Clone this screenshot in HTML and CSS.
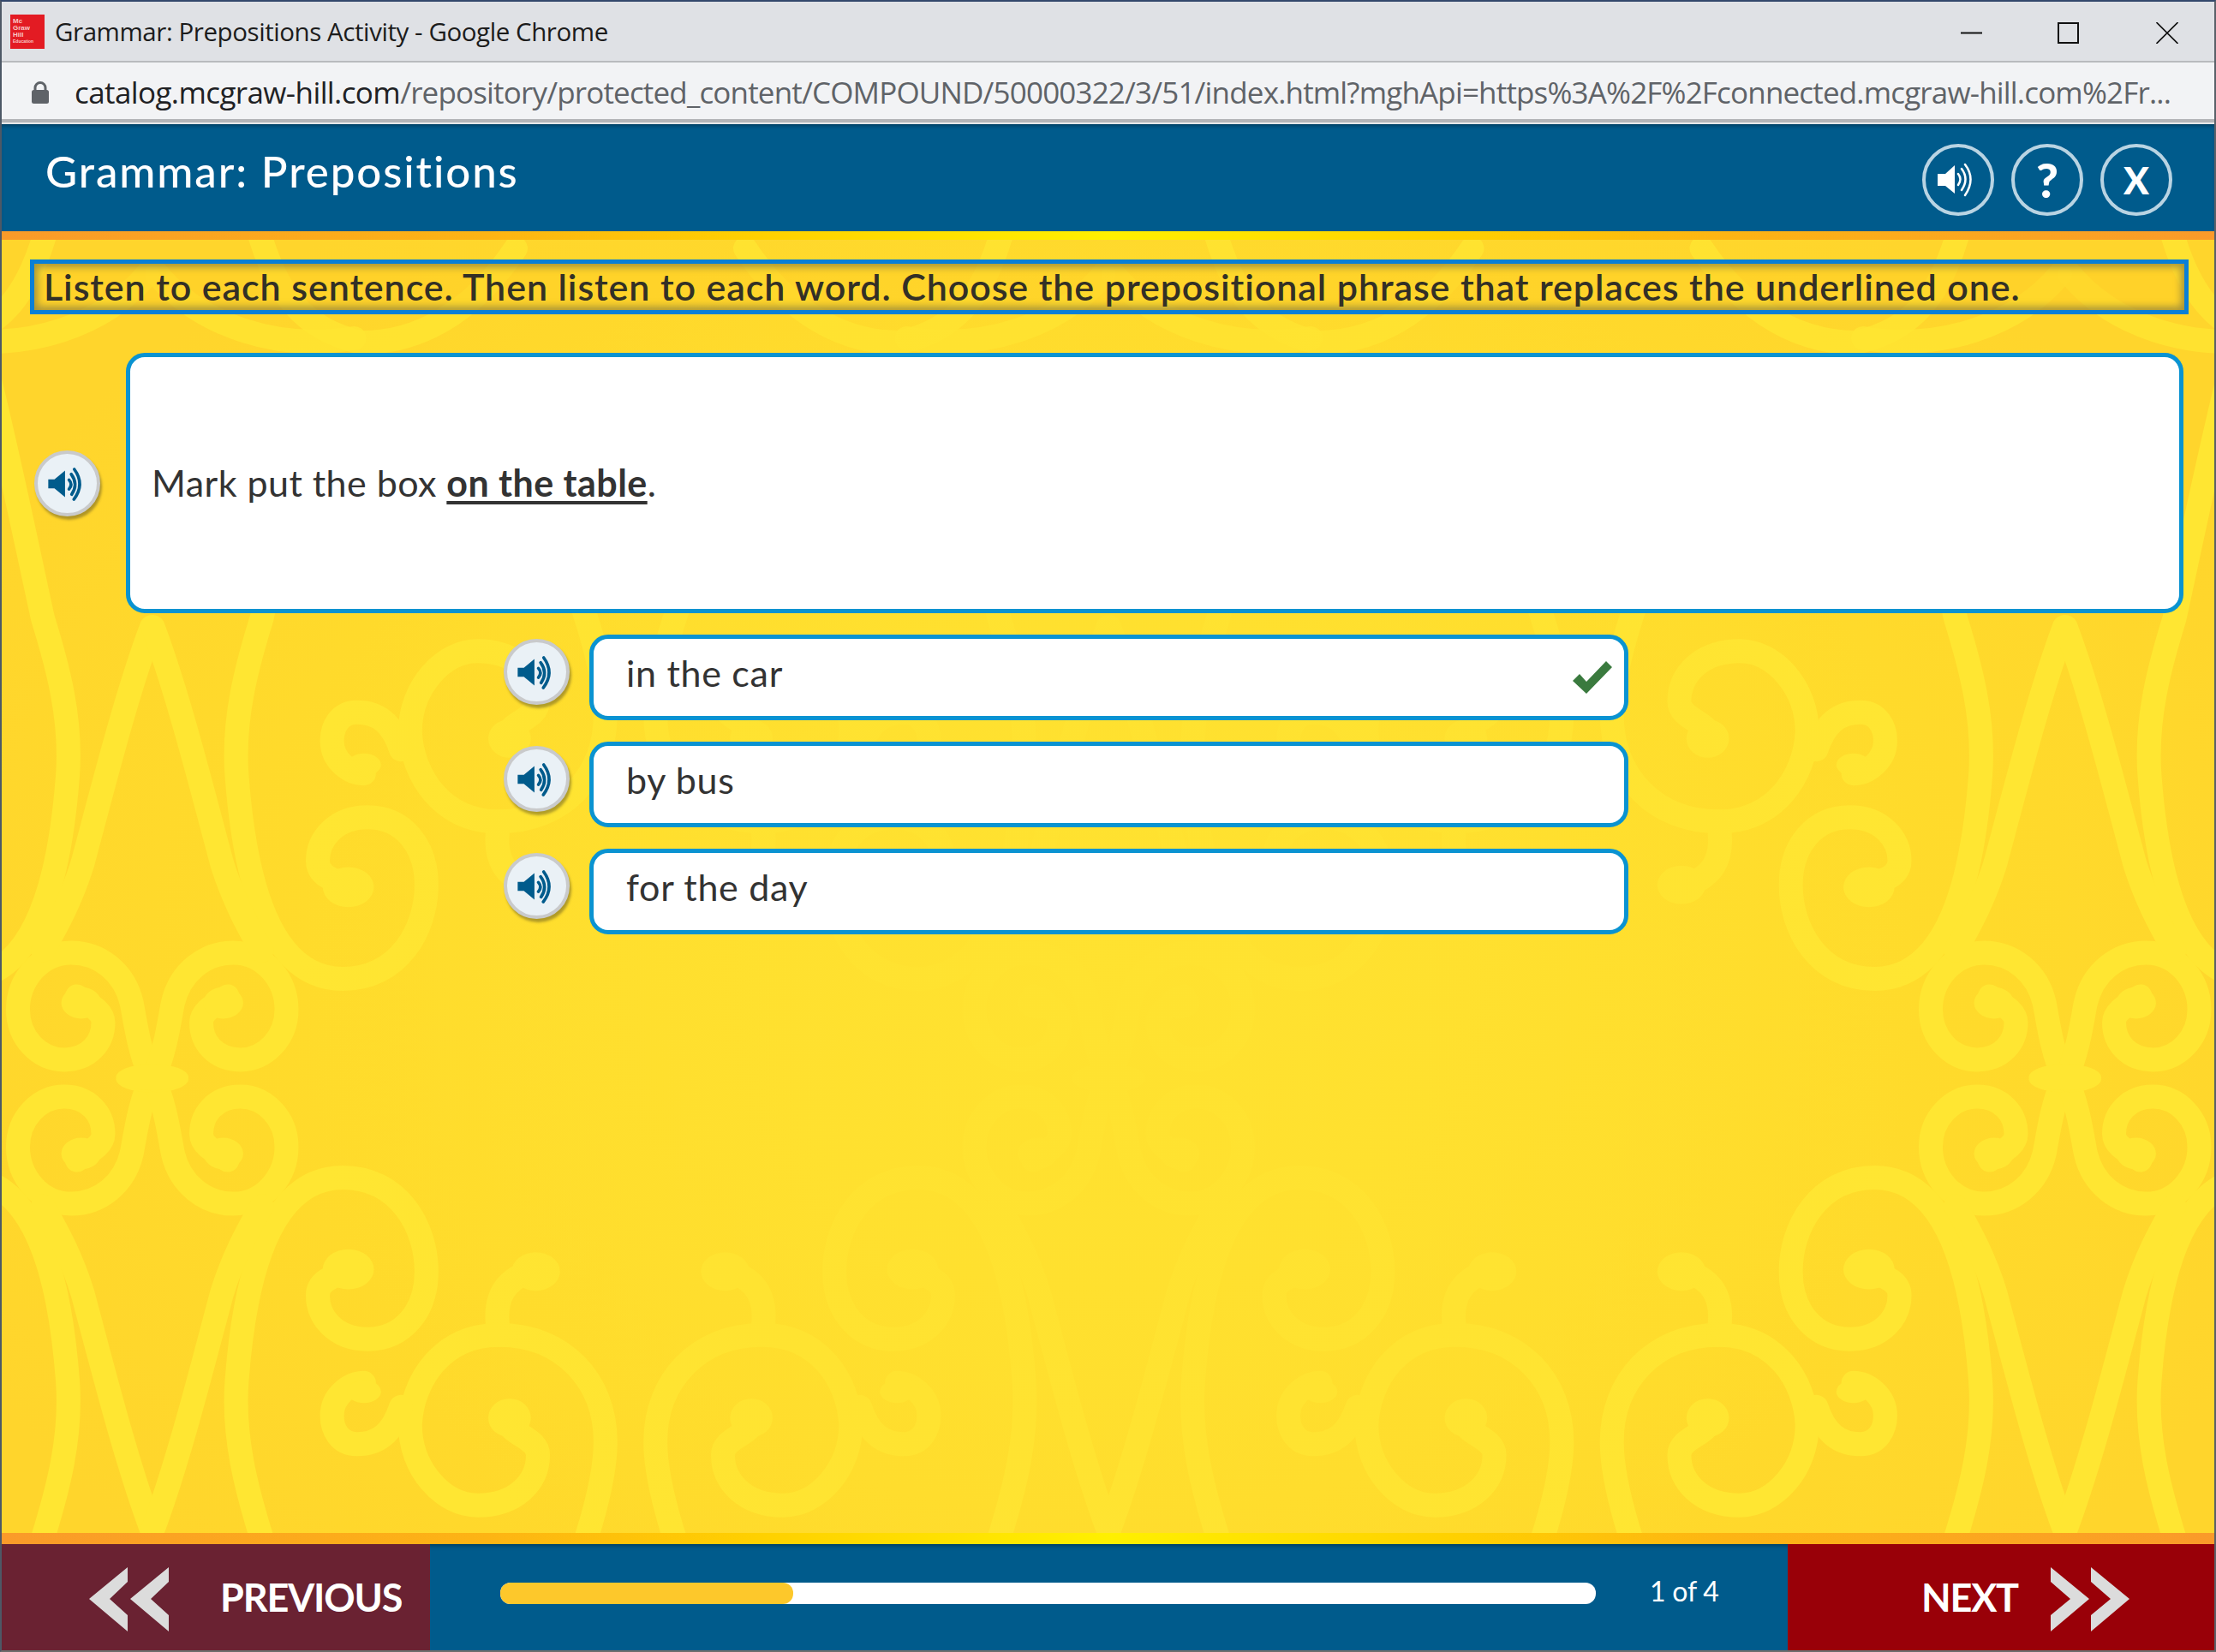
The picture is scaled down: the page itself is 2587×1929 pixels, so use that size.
FILE: index.html
```html
<!DOCTYPE html>
<html lang="en">
<head>
<meta charset="utf-8">
<title>Grammar: Prepositions Activity - Google Chrome</title>
<link rel="stylesheet" href="styles.css">
</head>
<body>
<div class="window">
  <div class="titlebar">
    <div class="favicon"><span>Mc</span><span>Graw</span><span>Hill</span><span class="fav-small">Education</span></div>
    <div class="window-title">Grammar: Prepositions Activity - Google Chrome</div>
    <div class="window-controls">
      <svg class="wc wc-min" viewBox="0 0 25 25"><path d="M0 12.5H25"/></svg>
      <svg class="wc wc-max" viewBox="0 0 25 25"><path d="M1 1H24V24H1Z"/></svg>
      <svg class="wc wc-close" viewBox="0 0 26 25"><path d="M.5 0 25.5 25M25.5 0 .5 25"/></svg>
    </div>
  </div>
  <div class="addressbar">
    <svg class="lock" viewBox="0 0 20 26"><path d="M4 11V7.5a6 6 0 0 1 12 0V11" fill="none" stroke="#5f6368" stroke-width="3"/><rect y="10" width="20" height="16" rx="2.5" fill="#5f6368"/></svg>
    <div class="url"><span class="url-host">catalog.mcgraw-hill.com</span>/repository/protected_content/COMPOUND/50000322/3/51/index.html?mghApi=https%3A%2F%2Fconnected.mcgraw-hill.com%2Fr...</div>
  </div>
  <header class="app-header">
    <h1 class="app-title">Grammar: Prepositions</h1>
    <div class="header-actions">
      <div class="round-btn">
        <svg class="round-icon" viewBox="0 0 84 84"><path class="fill-w" d="M18 35H27L38 25V58L27 49H18Z"/><path class="arc-w" d="M42 35Q47 41 42 48M46 29Q55 41 46 54M50 24Q63 41 50 60"/></svg>
      </div>
      <div class="round-btn round-q">?</div>
      <div class="round-btn round-x">X</div>
    </div>
  </header>
  <div class="band band-top"></div>
  <main class="stage">
    <svg class="pattern" viewBox="0 280 2583 1510" preserveAspectRatio="none">
      <defs>
        <radialGradient id="glow" gradientUnits="userSpaceOnUse" cx="1293" cy="1120" r="950">
          <stop offset="0" stop-color="#ffe230" stop-opacity=".94"/>
          <stop offset=".45" stop-color="#ffe130" stop-opacity=".72"/>
          <stop offset="1" stop-color="#ffdf30" stop-opacity="0"/>
        </radialGradient>
        <g id="quad" transform="translate(0 1000) scale(.8292 .5102)">
          <path class="sw" d="M213 505C231 570 236 640 241 680C251 750 286 795 326 795C371 795 401 730 401 665C401 600 371 550 336 550C301 550 281 590 281 635C281 665 306 680 318 695"/>
          <ellipse class="blob" cx="213" cy="510" rx="50" ry="30"/>
          <ellipse class="blob" cx="312" cy="680" rx="28" ry="36"/>
          <path class="sw" d="M440 2100C410 1900 385 1700 366 1560C345 1450 325 1330 331 1200C338 1050 360 735 480 735C560 735 598 850 598 950C598 1040 565 1105 515 1105C470 1105 445 1055 445 1005C445 965 475 960 490 945"/>
          <ellipse class="blob" cx="488" cy="945" rx="36" ry="46"/>
          <path class="sw" d="M213 1540C250 1380 285 1150 310 1000C325 920 345 860 366 800"/>
          <path class="sw" d="M815 1600C840 1480 850 1400 850 1340C850 1200 790 1095 700 1095C620 1095 578 1200 575 1300C575 1400 620 1485 670 1485C725 1485 755 1430 755 1370C755 1330 715 1325 712 1290"/>
          <ellipse class="blob" cx="715" cy="1285" rx="30" ry="44"/>
          <path class="sw" d="M700 1095C695 1050 695 1000 720 970C735 950 755 950 765 955"/>
          <ellipse class="blob" cx="752" cy="950" rx="34" ry="44"/>
          <path class="sw" d="M562 1260C550 1320 530 1345 500 1345C475 1345 465 1310 465 1280C465 1235 490 1205 510 1205"/>
          <ellipse class="blob" cx="510" cy="1225" rx="24" ry="26"/>
        </g>
        <g id="half">
          <use href="#quad"/>
          <use href="#quad" transform="matrix(1 0 0 -1 0 2518)"/>
          <path class="sw-top" d="M-60 395C30 410 120 380 170 320M300 270C320 340 350 385 420 400M420 400C500 400 560 350 600 290"/>
        </g>
        <g id="tile">
          <use href="#half"/>
          <use href="#half" transform="matrix(-1 0 0 1 1468 0)"/>
        </g>
      </defs>
      <use href="#tile" transform="translate(-1116.5 0)"/>
      <use href="#tile"/>
      <use href="#tile" transform="translate(1116.5 0)"/>
      <use href="#tile" transform="translate(2233 0)"/>
      <rect x="0" y="280" width="2583" height="1510" fill="url(#glow)"/>
    </svg>

    <div class="instructions">Listen to each sentence. Then listen to each word. Choose the prepositional phrase that replaces the underlined one.</div>

    <section class="question-row">
      <div class="speaker">
        <svg class="speaker-icon" viewBox="0 0 67 67"><path class="fill-b" d="M12 29H19L31 19V49L19 39H12Z"/><path class="arc-b" d="M35.500 29.500Q40 34.500 35.500 40M38 23Q46.500 34.500 38.500 46M41.500 17.500Q54 34.500 41 51.500"/></svg>
      </div>
      <div class="question-card"><span>Mark put the box <b class="target">on the table</b>.</span></div>
    </section>

    <section class="options">
      <div class="option-row">
        <div class="speaker">
          <svg class="speaker-icon" viewBox="0 0 67 67"><path class="fill-b" d="M12 29H19L31 19V49L19 39H12Z"/><path class="arc-b" d="M35.500 29.500Q40 34.500 35.500 40M38 23Q46.500 34.500 38.500 46M41.500 17.500Q54 34.500 41 51.500"/></svg>
        </div>
        <div class="option-box"><span>in the car</span>
          <svg class="check" viewBox="0 0 46 38"><path d="M0 23 8 15 16 24 39 0 46 7 16 38Z"/></svg>
        </div>
      </div>
      <div class="option-row">
        <div class="speaker">
          <svg class="speaker-icon" viewBox="0 0 67 67"><path class="fill-b" d="M12 29H19L31 19V49L19 39H12Z"/><path class="arc-b" d="M35.500 29.500Q40 34.500 35.500 40M38 23Q46.500 34.500 38.500 46M41.500 17.500Q54 34.500 41 51.500"/></svg>
        </div>
        <div class="option-box"><span>by bus</span></div>
      </div>
      <div class="option-row">
        <div class="speaker">
          <svg class="speaker-icon" viewBox="0 0 67 67"><path class="fill-b" d="M12 29H19L31 19V49L19 39H12Z"/><path class="arc-b" d="M35.500 29.500Q40 34.500 35.500 40M38 23Q46.500 34.500 38.500 46M41.500 17.500Q54 34.500 41 51.500"/></svg>
        </div>
        <div class="option-box"><span>for the day</span></div>
      </div>
    </section>
  </main>
  <div class="band band-bottom"></div>
  <footer class="app-footer">
    <div class="nav nav-prev">
      <svg class="chev" viewBox="0 0 94 75"><path d="M0 37 45 0V17L24 37 45 56V75ZM48 37 93 0V17L72 37 93 56V75Z"/></svg>
      <span class="nav-label">PREVIOUS</span>
    </div>
    <div class="progress-area">
      <div class="progress"><div class="progress-fill"></div></div>
      <div class="progress-label">1 of 4</div>
    </div>
    <div class="nav nav-next">
      <span class="nav-label">NEXT</span>
      <svg class="chev" viewBox="0 0 94 75"><path d="M0 0 45 37 0 75V56L23 37 0 17ZM47 0 92 37 47 75V56L70 37 47 17Z"/></svg>
    </div>
  </footer>
</div>
</body>
</html>
```
FILE: styles.css
```css
* { box-sizing: border-box; }
html, body { margin: 0; padding: 0; }
body { width: 2587px; height: 1929px; overflow: hidden; background: #6d6d6d; font-family: "Lato", "Liberation Sans", sans-serif; color: #333; }

.window { width: 2587px; height: 1929px; display: flex; flex-direction: column; border-top: 2px solid #33476b; border-left: 2px solid #4d5866; border-right: 2px solid #5a6068; border-bottom: 2px solid #6d6d6d; }

.titlebar { height: 71px; flex: none; display: flex; align-items: center; background: #dfe1e5; border-bottom: 2px solid #b9bbbe; padding-left: 10px; }
.favicon { width: 40px; height: 40px; background: #e31b23; color: #f8c8c8; display: flex; flex-direction: column; justify-content: center; padding-left: 3px; font: 700 8px/8px "Liberation Sans", sans-serif; overflow: hidden; }
.fav-small { font-size: 5px; line-height: 7px; }
.window-title { margin-left: 12px; font: 400 29.500px/40px "Open Sans", sans-serif; color: #1c1c1c; white-space: nowrap; letter-spacing: -.43px; }
.window-controls { margin-left: auto; display: flex; align-items: center; gap: 88px; padding: 3px 42px 0 0; }
.wc { fill: none; stroke: #111; stroke-width: 2; display: block; }
.wc-min { width: 25px; height: 25px; }
.wc-max { width: 25px; height: 25px; }
.wc-close { width: 26px; height: 25px; stroke-width: 1.600; margin-left: 2px; }

.addressbar { height: 70px; flex: none; display: flex; align-items: center; background: #f2f3f5; border-bottom: 4px solid #b4b5b8; padding: 4px 0 0 35px; }
.lock { width: 20px; height: 26px; flex: none; }
.url { margin-left: 30px; font: 400 35px/50px "Open Sans", sans-serif; color: #5f6368; white-space: nowrap; letter-spacing: -.83px; }
.url-host { color: #202124; letter-spacing: -.6px; }

.app-header { height: 127px; flex: none; background: #005b8c; border-top: 2px solid #e6e7e9; box-shadow: inset 0 4px 4px -2px rgba(0,30,50,.5); display: flex; align-items: center; padding: 0 49px 0 51px; }
.app-title { margin: 0 0 15px; font: 500 51px/60px "Lato", sans-serif; color: #fff; letter-spacing: 1.9px; }
.header-actions { margin-left: auto; display: flex; gap: 20px; padding-top: 5px; }
.round-btn { width: 84px; height: 84px; border: 4px solid #b9d4e3; border-radius: 50%; color: #fff; display: flex; align-items: center; justify-content: center; font-family: "Lato", sans-serif; font-weight: 900; }
.round-q { font-size: 56px; line-height: 1; }
.round-x { font-size: 44px; line-height: 1; }
.round-icon { width: 84px; height: 84px; margin: -4px; flex: none; }
.fill-w { fill: #fff; }
.arc-w { fill: none; stroke: #fff; stroke-width: 2.500; stroke-linecap: round; }

.band { flex: none; background: linear-gradient(90deg, #fa9a2a 0%, #fdb414 22%, #ffd000 34%, #fff000 50%, #ffd000 66%, #fdb414 78%, #fa9a2a 100%); }
.band-top { height: 10px; }
.band-bottom { height: 13px; }

.stage { flex: 1; position: relative; overflow: hidden; background: radial-gradient(ellipse 1500px 1050px at 50% 55%, #ffe02d 0, #ffdb2b 62%, #ffd52c 100%); }
.pattern { position: absolute; left: 0; top: 0; width: 100%; height: 100%; display: block; }
.sw, .sw-top { fill: none; stroke: #ffe632; stroke-width: 28px; stroke-linecap: round; vector-effect: non-scaling-stroke; }
.sw-top { opacity: .8; }
.blob { fill: #ffe632; }

.instructions { position: relative; margin: 23px 0 0 33px; width: 2520px; height: 64px; border: 5px solid #0a7fd6; box-shadow: inset 0 0 9px 4px rgba(96,96,70,.55); background: rgba(255,208,40,.55); padding: 1px 0 0 11px; font: 600 43px/52px "Lato", sans-serif; color: #333026; white-space: nowrap; letter-spacing: .91px; }

.question-row { position: relative; margin: 45px 0 0 38px; display: flex; align-items: center; gap: 30px; }
.question-card { width: 2402px; height: 304px; background: #fff; border: 5px solid #0a93d1; border-radius: 22px; display: flex; align-items: center; padding-left: 25px; font: 400 43px/52px "Lato", sans-serif; color: #333; letter-spacing: .45px; }
.target { font-weight: 700; text-decoration: underline; text-decoration-thickness: 4px; text-underline-offset: 5px; }

.speaker { width: 77px; height: 77px; flex: none; border-radius: 50%; background: #eaf1f6; border: 4px solid #c9cacb; box-shadow: 2px 4px 3px rgba(80,70,30,.45); }
.speaker-icon { width: 69px; height: 69px; display: block; }
.fill-b { fill: #005b8c; }
.arc-b { fill: none; stroke: #005b8c; stroke-width: 3.500; stroke-linecap: round; }

.options { position: relative; margin: 25px 0 0 586px; display: flex; flex-direction: column; gap: 25px; }
.option-row { display: flex; align-items: flex-start; gap: 23px; }
.option-row .speaker { margin-top: 5px; }
.option-box { width: 1213px; height: 100px; background: #fff; border: 5px solid #0a93d1; border-radius: 22px; display: flex; align-items: center; justify-content: space-between; padding: 0 14px 10px 38px; font: 400 43px/52px "Lato", sans-serif; color: #333; letter-spacing: .7px; }
.check { width: 46px; height: 38px; fill: #3a7a3e; margin-top: 10px; }

.app-footer { height: 124px; flex: none; display: flex; background: #005b8c; box-shadow: inset 0 4px 5px -2px rgba(0,30,50,.5); }
.nav { width: 500px; flex: none; display: flex; align-items: center; color: #fff; }
.nav-prev { background: #6a2232; padding-left: 102px; gap: 59px; }
.nav-next { width: 498px; background: #990008; padding-left: 156px; gap: 38px; }
.nav-label { font: 700 45px/50px "Lato", sans-serif; letter-spacing: -1.200px; }
.chev { width: 94px; height: 75px; fill: #dcdcdc; flex: none; margin-top: 5px; }
.progress-area { flex: 1; display: flex; align-items: flex-start; padding: 45px 0 0 82px; gap: 63px; }
.progress { width: 1279px; height: 25px; background: #fff; border-radius: 12px; }
.progress-fill { width: 342px; height: 25px; background: #fdc82b; border-radius: 12px; }
.progress-label { font: 400 32px/25px "Lato", sans-serif; color: #fff; white-space: nowrap; margin-top: -3px; letter-spacing: -.2px; }
```
